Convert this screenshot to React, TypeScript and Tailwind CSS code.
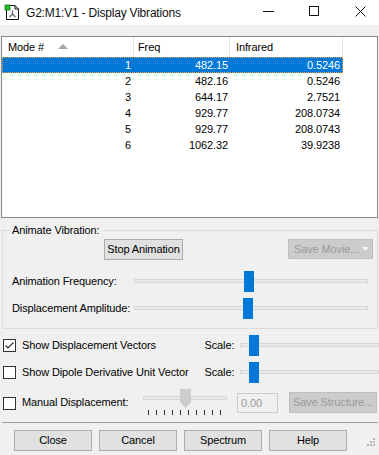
import React from "react";

const rows = [
  ["1", "482.15", "0.5246"],
  ["2", "482.16", "0.5246"],
  ["3", "644.17", "2.7521"],
  ["4", "929.77", "208.0734"],
  ["5", "929.77", "208.0743"],
  ["6", "1062.32", "39.9238"],
];

function Track({ width, thumbLeft }: { width: number; thumbLeft: number }) {
  return (
    <div className="relative h-[21px]" style={{ width }}>
      <div className="absolute left-0 right-0 top-[8px] h-[4px] bg-[#e7eaea] border border-[#d6d6d6]" />
      <div className="absolute top-0 w-[10px] h-[21px] bg-[#0078d7]" style={{ left: thumbLeft }} />
    </div>
  );
}

function CheckBox({ checked }: { checked?: boolean }) {
  return (
    <div className="w-[13px] h-[13px] bg-white border border-[#333333] flex items-center justify-center shrink-0">
      {checked && (
        <svg width="11" height="11" viewBox="0 0 11 11">
          <path d="M1.5 5.5 L4 8 L9.5 2.5" fill="none" stroke="#333" strokeWidth="1.2" />
        </svg>
      )}
    </div>
  );
}

function Btn({ children, w, className = "" }: { children: React.ReactNode; w: number; className?: string }) {
  return (
    <div
      className={"h-[21px] bg-[#e1e1e1] border border-[#adadad] flex items-center justify-center text-black " + className}
      style={{ width: w }}
    >
      {children}
    </div>
  );
}

export default function App() {
  return (
    <div
      className="w-[379px] h-[455px] bg-[#f0f0f0] overflow-hidden relative text-[11px] tracking-[-0.12px] text-black"
      style={{ fontFamily: '"Liberation Sans", Arial, sans-serif' }}
    >
      {/* Title bar */}
      <div className="h-[25px] bg-white flex items-center relative">
        <svg className="ml-[4px]" width="17" height="17" viewBox="0 0 17 17">
          <path d="M2.5 1.5 H11 L14.5 5 V15.5 H2.5 Z" fill="#fff" stroke="#111" strokeWidth="1" />
          <path d="M11 1.5 V5 H14.5" fill="none" stroke="#111" strokeWidth="1" />
          <rect x="1" y="1" width="5" height="5" fill="#22c32e" stroke="#0a7a10" strokeWidth="0.8" />
          <path d="M8.5 6.5 V10 M8.5 10 L5.5 13 M8.5 10 L11.5 13" stroke="#666" strokeWidth="1.3" fill="none" />
        </svg>
        <span className="ml-[5px] text-[12px] tracking-[-0.2px] text-[#111]">
          G2:M1:V1 - Display Vibrations
        </span>
        <div className="absolute left-[263px] top-[11px] w-[11px] h-[1px] bg-[#111]" />
        <div className="absolute left-[309px] top-[6px] w-[10px] h-[10px] border border-[#111]" />
        <svg className="absolute left-[355px] top-[6px]" width="11" height="11" viewBox="0 0 11 11">
          <path d="M0.5 0.5 L10.5 10.5 M10.5 0.5 L0.5 10.5" stroke="#111" strokeWidth="1" />
        </svg>
      </div>

      {/* List */}
      <div className="mt-[11px] ml-[1px] w-[377px] h-[182px] bg-white border border-[#828790] flex flex-col">
        <div className="h-[20px] flex shrink-0">
          <div className="w-[132px] h-full border-r border-[#e5e5e5] flex items-center pl-[6px] relative">
            Mode #
            <svg className="absolute left-[56px] top-[7px]" width="10" height="5" viewBox="0 0 10 5">
              <path d="M0 5 L5 0 L10 5 Z" fill="#a6a6a6" />
            </svg>
          </div>
          <div className="w-[96px] h-full border-r border-[#e5e5e5] flex items-center pl-[4px]">Freq</div>
          <div className="w-[113px] h-full border-r border-[#e5e5e5] flex items-center pl-[6px]">Infrared</div>
        </div>
        {rows.map((r, i) => (
          <div
            key={i}
            className={
              "h-[16px] w-[341px] flex items-center " +
              (i === 0 ? "bg-[#0078d7] text-white outline outline-1 outline-dotted outline-[#f2a04a] -outline-offset-1" : "")
            }
          >
            <div className="w-[132px] text-right pr-[3px]">{r[0]}</div>
            <div className="w-[96px] text-right pr-[2px]">{r[1]}</div>
            <div className="w-[113px] text-right pr-[3px]">{r[2]}</div>
          </div>
        ))}
      </div>

      {/* Animate group */}
      <div className="mt-[12px] ml-[2px] w-[376px] h-[99px] border border-[#dcdcdc] relative flex flex-col">
        <span className="absolute left-[7px] top-[-8px] px-[2px] bg-[#f0f0f0] leading-[14px]">Animate Vibration:</span>
        <div className="mt-[8px] h-[21px] flex items-start">
          <Btn w={79} className="ml-[101px]">Stop Animation</Btn>
          <div className="ml-auto mr-[4px] w-[85px] h-[20px] bg-[#cccccc] border border-[#bfbfbf] flex items-center pl-[5px] text-[#9a9a9a]">
            Save Movie...
            <svg className="ml-[3px]" width="7" height="4" viewBox="0 0 7 4">
              <path d="M0 0 H7 L3.5 4 Z" fill="#f4f4f4" />
            </svg>
          </div>
        </div>
        <div className="mt-[11px] h-[21px] flex items-center">
          <span className="ml-[9px] w-[122px]">Animation Frequency:</span>
          <Track width={234} thumbLeft={110} />
        </div>
        <div className="mt-[6px] h-[21px] flex items-center">
          <span className="ml-[9px] w-[122px]">Displacement Amplitude:</span>
          <Track width={234} thumbLeft={109} />
        </div>
      </div>

      {/* Checkbox rows */}
      <div className="mt-[6px] h-[21px] flex items-center">
        <div className="ml-[3px]"><CheckBox checked /></div>
        <span className="ml-[6px] w-[184px]">Show Displacement Vectors</span>
        <span className="w-[36px]">Scale:</span>
        <Track width={140} thumbLeft={9} />
      </div>
      <div className="mt-[6px] h-[21px] flex items-center">
        <div className="ml-[3px]"><CheckBox /></div>
        <span className="ml-[6px] w-[184px] whitespace-nowrap">Show Dipole Derivative Unit Vector</span>
        <span className="w-[36px]">Scale:</span>
        <Track width={140} thumbLeft={9} />
      </div>
      <div className="mt-[6px] h-[27px] flex items-start">
        <div className="ml-[3px] mt-[8px]"><CheckBox /></div>
        <span className="ml-[6px] mt-[6px] leading-[14px] w-[121px]">Manual Displacement:</span>
        <div className="relative w-[84px] h-[27px]">
          <div className="absolute left-0 right-0 top-[7px] h-[4px] bg-[#e7eaea] border border-[#d6d6d6]" />
          <svg className="absolute left-[37px] top-0" width="11" height="19" viewBox="0 0 11 19">
            <path d="M0 0 H11 V13 L5.5 19 L0 13 Z" fill="#cdcdcd" />
          </svg>
          <div className="absolute left-[5px] top-[21px] flex gap-[7px]">
            {Array.from({ length: 10 }).map((_, i) => (
              <div key={i} className="w-[1px] h-[5px] bg-[#333]" />
            ))}
          </div>
        </div>
        <div className="ml-[10px] mt-[4px] w-[41px] h-[20px] border border-[#cccccc] flex items-center pl-[3px] text-[#9a9a9a]">
          0.00
        </div>
        <div className="ml-[11px] mt-[3px] w-[88px] h-[21px] bg-[#cccccc] border border-[#bfbfbf] flex items-center justify-center text-[#9a9a9a]">
          Save Structure...
        </div>
      </div>

      {/* Separator */}
      <div className="mt-[6px] ml-[2px] w-[376px] h-[1px] bg-[#a0a0a0]" />

      {/* Bottom buttons */}
      <div className="mt-[7px] ml-[14px] flex gap-[7px]">
        <Btn w={78}>Close</Btn>
        <Btn w={78}>Cancel</Btn>
        <Btn w={78}>Spectrum</Btn>
        <Btn w={78}>Help</Btn>
      </div>

      {/* Size grip */}
      <svg className="absolute left-[366px] top-[437px]" width="10" height="10" viewBox="0 0 10 10">
        {[
          [7, 1], [4, 4], [7, 4], [1, 7], [4, 7], [7, 7],
        ].map(([x, y], i) => (
          <rect key={i} x={x} y={y} width="2" height="2" fill="#b8b8b8" />
        ))}
      </svg>
    </div>
  );
}
